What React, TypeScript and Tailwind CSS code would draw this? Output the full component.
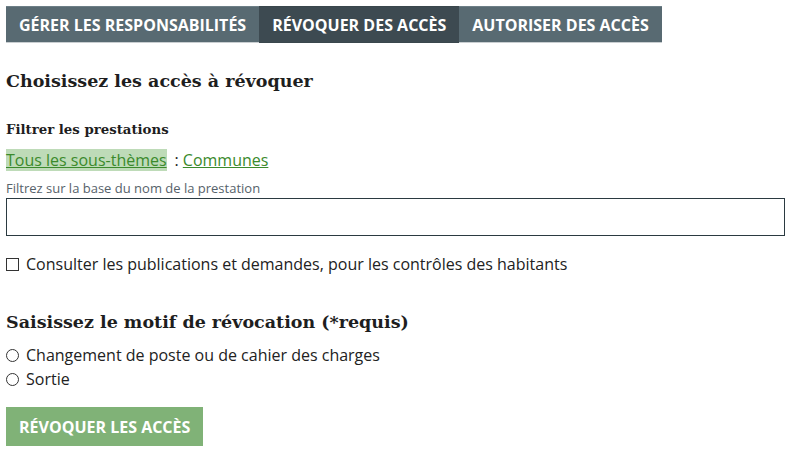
const tabs = [
  { label: 'Gérer les responsabilités', active: false },
  { label: 'Révoquer des accès', active: true },
  { label: 'Autoriser des accès', active: false },
];

export default function App() {
  return (
    <div className="min-h-[456px] bg-white px-[6px] pt-[6px] font-['Open_Sans',sans-serif] text-[#222]">
      {/* Tabs */}
      <nav className="flex">
        {tabs.map((tab) => (
          <a
            key={tab.label}
            href="#"
            className={`flex h-[37px] items-center border-t border-b px-[13px] text-[16px] font-bold uppercase text-white ${
              tab.active
                ? 'border-t-[#3a474d] border-b-[#3a474d] bg-[#3d4a51]'
                : 'border-t-[#6d7f87] border-b-[#c9ced1] bg-[#586a72]'
            }`}
          >
            {tab.label}
          </a>
        ))}
      </nav>

      <h2 className="mt-[25px] font-['DejaVu_Serif',serif] text-[17.5px] font-bold leading-[26px] text-[#1e1e1e]">
        Choisissez les accès à révoquer
      </h2>

      <h3 className="mt-[26px] font-['DejaVu_Serif',serif] text-[13.3px] font-bold leading-[20px] text-[#1e1e1e]">
        Filtrer les prestations
      </h3>

      <div className="mt-[9px] flex items-center text-[16px] leading-[22px]">
        <a href="#" className="bg-[#bedbb8] text-[#3b8a2c] underline">
          Tous les sous-thèmes
        </a>
        <span className="ml-[8px] text-[#222]">:</span>
        <a href="#" className="ml-[4px] text-[#3b8a2c] underline">
          Communes
        </a>
      </div>

      <label className="mt-[9px] block text-[13px] leading-[16px] text-[#56626a]">
        Filtrez sur la base du nom de la prestation
        <input
          type="text"
          className="mt-[2px] block h-[38px] w-[779px] border border-[#2b3a41] bg-white px-2 outline-none"
        />
      </label>

      <label className="mt-[17px] flex items-center gap-[7px] text-[16px] leading-[22px] text-[#222]">
        <span className="h-[13px] w-[13px] border border-[#333]" />
        Consulter les publications et demandes, pour les contrôles des habitants
      </label>

      <h2 className="mt-[34px] font-['DejaVu_Serif',serif] text-[17.5px] font-bold leading-[26px] text-[#1e1e1e]">
        Saisissez le motif de révocation (*requis)
      </h2>

      <div className="mt-[8px] flex flex-col text-[16px] leading-[24px] text-[#222]">
        {['Changement de poste ou de cahier des charges', 'Sortie'].map((opt) => (
          <label key={opt} className="flex items-center gap-[7px]">
            <span className="h-[13px] w-[13px] rounded-full border border-[#333]" />
            {opt}
          </label>
        ))}
      </div>

      <button className="mt-[16px] h-[39px] bg-[#80b277] px-[13px] text-[16px] font-bold uppercase text-white">
        Révoquer les accès
      </button>
    </div>
  );
}
